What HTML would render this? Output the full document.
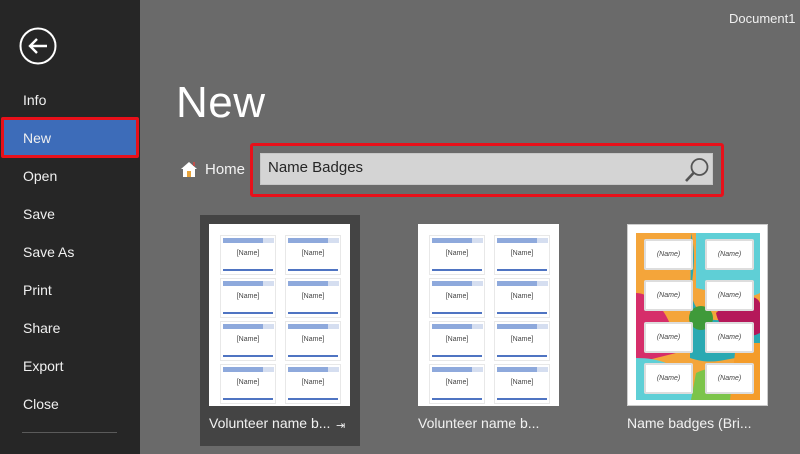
<!DOCTYPE html>
<html><head><meta charset="utf-8"><style>
*{margin:0;padding:0;box-sizing:border-box}
body{width:800px;height:454px;overflow:hidden;background:#6a6a6a;font-family:"Liberation Sans",sans-serif;position:relative;color:#fff}
.side{position:absolute;left:0;top:0;width:140px;height:454px;background:#262626}
.nav{position:absolute;left:23px;font-size:14px;color:#f0f0f0}
.abs{position:absolute}
.badge{position:absolute;width:56px;height:40px;background:#fff;border:1px solid #e8e8e8}
.badge .t{position:absolute;left:2px;top:2px;width:40px;height:5px;background:#8ea9dc}
.badge .t2{position:absolute;left:42px;top:2px;width:11px;height:5px;background:#d5def0}
.badge .n{position:absolute;left:0;right:0;top:14px;text-align:center;font-size:7px;color:#444}
.badge .b{position:absolute;left:2px;right:2px;bottom:3px;height:2px;background:#4f74c2}
.thumb{position:absolute;width:141px;height:182px;background:#fff}
.cb{position:absolute;width:49px;height:31px;background:#fff;border:2px solid #ddd;border-radius:2px;font-size:7px;color:#444;text-align:center;line-height:27px;font-style:italic}
.lbl{position:absolute;top:415px;font-size:14px;color:#f2f2f2}
</style></head><body>
<div class="side">
  <svg class="abs" style="left:19px;top:27px" width="40" height="40" viewBox="0 0 40 40"><circle cx="19" cy="19" r="17.5" fill="none" stroke="#fff" stroke-width="2"/><path d="M28 19H11M18 12l-7 7 7 7" fill="none" stroke="#fff" stroke-width="2.4"/></svg>
  <div class="nav" style="top:92px">Info</div>
  <div class="abs" style="left:1px;top:117px;width:138px;height:41px;background:#3d6cb9;border:3px solid #e8101a;border-radius:2px"></div>
  <div class="nav" style="top:130px">New</div>
  <div class="nav" style="top:168px">Open</div>
  <div class="nav" style="top:206px">Save</div>
  <div class="nav" style="top:244px">Save As</div>
  <div class="nav" style="top:282px">Print</div>
  <div class="nav" style="top:320px">Share</div>
  <div class="nav" style="top:358px">Export</div>
  <div class="nav" style="top:396px">Close</div>
  <div class="abs" style="left:22px;top:432px;width:95px;height:1px;background:#5a5a5a"></div>
</div>
<div class="abs" style="left:729px;top:11px;font-size:13px;color:#f0f0f0">Document1</div>
<div class="abs" style="left:176px;top:78px;font-size:44px;font-weight:300;color:#fff;letter-spacing:0.5px;line-height:50px">New</div>
<svg class="abs" style="left:180px;top:160px" width="18" height="18" viewBox="0 0 18 18"><path d="M1 9L9 2l8 7" fill="#fff"/><path d="M3 8h12v9H3z" fill="#fff"/><rect x="7" y="11" width="4" height="6" fill="#e7a33a"/><rect x="13" y="2" width="2" height="4" fill="#c0504d"/></svg>
<div class="abs" style="left:205px;top:161px;font-size:15px;color:#f2f2f2">Home</div>
<div class="abs" style="left:250px;top:143px;width:474px;height:54px;border:3px solid #e8101a;border-radius:3px"></div>
<div class="abs" style="left:260px;top:153px;width:453px;height:32px;background:#d4d4d4;border:1px solid #c6c6c6"></div>
<div class="abs" style="left:268px;top:159px;font-size:15px;color:#262626">Name Badges</div>
<svg class="abs" style="left:682px;top:155px" width="30" height="30" viewBox="0 0 30 30"><circle cx="17.5" cy="12" r="8" fill="none" stroke="#555" stroke-width="1.8"/><path d="M11.5 18L4 26" stroke="#555" stroke-width="2.6"/></svg>

<div class="abs" style="left:200px;top:215px;width:160px;height:231px;background:#444"></div>
<div class="thumb" style="left:209px;top:224px" id="t1"></div>
<div class="thumb" style="left:418px;top:224px" id="t2"></div>
<div class="thumb" style="left:627px;top:224px;border:1px solid #ccc">
  <svg class="abs" style="left:8px;top:8px" width="124" height="167" viewBox="0 0 124 167">
    <rect width="124" height="167" fill="#f4a53a"/>
    <path d="M60 0h64v60c-20 10-40 0-64-5z" fill="#5fcfd6"/>
    <path d="M55 0c10 40-10 60 10 80s40-10 59 5v40c-30-5-40 10-70 0z" fill="#2aa9b2"/>
    <path d="M0 60c20 0 40 30 40 60L0 130z" fill="#d62e6a"/>
    <path d="M80 80c20-20 40-20 44-10v30c-20 10-40 0-44-20z" fill="#b5185a"/>
    <circle cx="65" cy="85" r="12" fill="#3f9a3a"/>
    <path d="M0 125c30 0 50 10 60 42H0z" fill="#5fcfd6"/>
    <path d="M60 140c20-10 40-5 50 27H55z" fill="#7cc44a"/>
    <path d="M100 110h24v57h-30z" fill="#f49c2a"/>
  </svg>
  <div class="cb" style="left:16px;top:14px">(Name)</div><div class="cb" style="left:77px;top:14px">(Name)</div>
  <div class="cb" style="left:16px;top:55px">(Name)</div><div class="cb" style="left:77px;top:55px">(Name)</div>
  <div class="cb" style="left:16px;top:97px">(Name)</div><div class="cb" style="left:77px;top:97px">(Name)</div>
  <div class="cb" style="left:16px;top:138px">(Name)</div><div class="cb" style="left:77px;top:138px">(Name)</div>
</div>
<div class="lbl" style="left:209px">Volunteer name b...</div>
<div class="abs" style="left:336px;top:419px;font-size:11px;color:#eee">⇥</div>
<div class="lbl" style="left:418px">Volunteer name b...</div>
<div class="lbl" style="left:627px">Name badges (Bri...</div>
<script>
['t1','t2'].forEach(function(id){var t=document.getElementById(id);var h='';
for(var r=0;r<4;r++)for(var c=0;c<2;c++){h+='<div class="badge" style="left:'+(11+c*65)+'px;top:'+(11+r*43)+'px"><div class="t"></div><div class="t2"></div><div class="n">[Name]</div><div class="b"></div></div>';}
t.innerHTML=h;});
</script>
</body></html>
